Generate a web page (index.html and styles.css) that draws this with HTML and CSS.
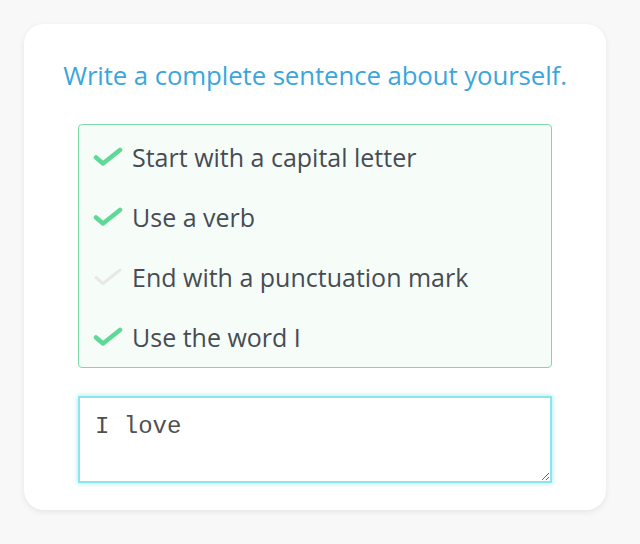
FILE: index.html
```html
<!DOCTYPE html>
<html>
<head>
<meta charset="utf-8">
<link rel="stylesheet" href="styles.css">
</head>
<body>
<div class="card">
  <h1 class="title">Write a complete sentence about yourself.</h1>
  <ul class="checklist">
    <li class="item done"><svg class="check" viewBox="0 0 30 20"><path d="M3 10.5 L10 16.5 L27 3"/></svg><span>Start with a capital letter</span></li>
    <li class="item done"><svg class="check" viewBox="0 0 30 20"><path d="M3 10.5 L10 16.5 L27 3"/></svg><span>Use a verb</span></li>
    <li class="item todo"><svg class="check" viewBox="0 0 30 20"><path d="M3 10.5 L10 16.5 L27 3"/></svg><span>End with a punctuation mark</span></li>
    <li class="item done"><svg class="check" viewBox="0 0 30 20"><path d="M3 10.5 L10 16.5 L27 3"/></svg><span>Use the word I</span></li>
  </ul>
  <textarea class="answer">I love</textarea>
</div>
</body>
</html>
```
FILE: styles.css
```css
html, body {
  margin: 0;
  padding: 0;
}
body {
  background: #f8f8f8;
  padding: 24px 34px 34px 24px;
  font-family: "Open Sans", sans-serif;
}
.card {
  width: 582px;
  height: 486px;
  box-sizing: border-box;
  background: #ffffff;
  border-radius: 20px;
  box-shadow: 0 2px 6px rgba(0,0,0,0.08);
  padding: 36px 54px 0 54px;
  display: flex;
  flex-direction: column;
}
.title {
  margin: 0 -40px;
  font-size: 25.8px;
  line-height: 30px;
  font-weight: 400;
  color: #3aa6dc;
  text-align: center;
  white-space: nowrap;
  letter-spacing: -0.1px;
}
.checklist {
  list-style: none;
  margin: 34px 0 0 0;
  padding: 17px 0 15px 14px;
  border: 1px solid #7dd9a6;
  border-radius: 4px;
  background: #f6fdf8;
  display: flex;
  flex-direction: column;
  gap: 30px;
  flex-shrink: 0;
}
.item {
  display: flex;
  align-items: center;
  gap: 9px;
  height: 30px;
  font-size: 25px;
  color: #474c54;
}
.check {
  width: 30px;
  height: 20px;
  fill: none;
  stroke-width: 4.5;
  stroke-linecap: round;
  stroke-linejoin: round;
}
.done .check { stroke: #5fd898; }
.todo .check {
  stroke: #e8e8e8;
  stroke-width: 3;
}
.answer {
  margin-top: 28px;
  height: 87px;
  flex-shrink: 0;
  width: 100%;
  box-sizing: border-box;
  border: 2px solid #8ee4ec;
  box-shadow: 0 0 5px rgba(120, 225, 235, 0.8);
  outline: none;
  padding: 16px 15px 15px;
  font-family: "Liberation Mono", monospace;
  font-size: 24px;
  line-height: 26px;
  color: #505050;
  resize: vertical;
  background: #fff;
}
```
